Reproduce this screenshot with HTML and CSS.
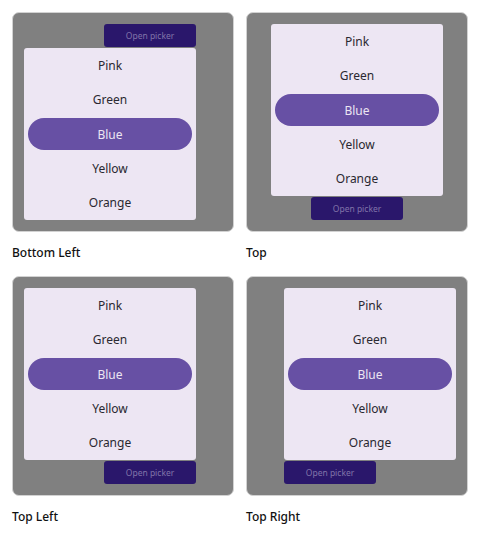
FILE: index.html
```html
<!DOCTYPE html>
<html>
<head>
<meta charset="utf-8">
<link rel="stylesheet" href="styles.css">
</head>
<body>
<div class="grid">
  <div class="cell">
    <div class="card card-bl">
      <div class="anchor">
        <button class="open-btn">Open picker</button>
        <ul class="popup">
          <li>Pink</li><li>Green</li><li class="sel">Blue</li><li>Yellow</li><li>Orange</li>
        </ul>
      </div>
    </div>
    <div class="label">Bottom Left</div>
  </div>
  <div class="cell">
    <div class="card card-t">
      <div class="anchor">
        <button class="open-btn">Open picker</button>
        <ul class="popup">
          <li>Pink</li><li>Green</li><li class="sel">Blue</li><li>Yellow</li><li>Orange</li>
        </ul>
      </div>
    </div>
    <div class="label">Top</div>
  </div>
  <div class="cell">
    <div class="card card-tl">
      <div class="anchor">
        <button class="open-btn">Open picker</button>
        <ul class="popup">
          <li>Pink</li><li>Green</li><li class="sel">Blue</li><li>Yellow</li><li>Orange</li>
        </ul>
      </div>
    </div>
    <div class="label">Top Left</div>
  </div>
  <div class="cell">
    <div class="card card-tr">
      <div class="anchor">
        <button class="open-btn">Open picker</button>
        <ul class="popup">
          <li>Pink</li><li>Green</li><li class="sel">Blue</li><li>Yellow</li><li>Orange</li>
        </ul>
      </div>
    </div>
    <div class="label">Top Right</div>
  </div>
</div>
</body>
</html>
```

FILE: styles.css
```css
* { box-sizing: border-box; }
html, body { margin: 0; padding: 0; background: #ffffff; }
body {
  font-family: "Noto Sans", "Open Sans", "DejaVu Sans", sans-serif;
  color: #1c1b1f;
}
.grid {
  display: grid;
  grid-template-columns: 222px 222px;
  column-gap: 12px;
  row-gap: 12px;
  padding: 12px 0 0 12px;
}
.cell { display: flex; flex-direction: column; }
.card {
  position: relative;
  width: 222px;
  height: 220px;
  background: #808080;
  border: 1px solid #d2d2d2;
  border-radius: 7px;
  display: flex;
  flex-direction: column;
}
.card-bl { padding: 11px 0 0 91px; align-items: flex-start; justify-content: flex-start; }
.card-t { padding: 0 0 11px 64px; align-items: flex-start; justify-content: flex-end; }
.card-tl { padding: 0 0 11px 91px; align-items: flex-start; justify-content: flex-end; }
.card-tr { padding: 0 0 11px 37px; align-items: flex-start; justify-content: flex-end; }
.anchor { position: relative; width: 92px; height: 23px; }
.open-btn {
  display: block;
  width: 92px;
  height: 23px;
  margin: 0;
  padding: 0;
  border: none;
  border-radius: 3px;
  background: #2a176b;
  color: #8174a9;
  font-family: "Noto Sans", "Open Sans", sans-serif;
  font-size: 8.5px;
}
.popup {
  position: absolute;
  width: 172px;
  height: 172px;
  margin: 0;
  padding: 0;
  list-style: none;
  background: #ede6f3;
  border-radius: 3px;
  display: flex;
  flex-direction: column;
}
.card-bl .popup { top: 24px; right: 0; }
.card-t .popup { bottom: 24px; left: -40px; }
.card-tl .popup { bottom: 24px; right: 0; }
.card-tr .popup { bottom: 24px; left: 0; }
.popup li {
  flex: 1;
  display: flex;
  align-items: center;
  justify-content: center;
  font-size: 12px;
  color: #2a2830;
  margin: 1.5px 4px;
  border-radius: 16px;
}
.popup li.sel {
  background: #6750a4;
  color: #ece6f2;
}
.label {
  margin-top: 12px;
  height: 20px;
  font-family: "Noto Sans", "Open Sans", sans-serif;
  font-weight: 500;
  font-size: 12px;
  color: #111111;
}
```
